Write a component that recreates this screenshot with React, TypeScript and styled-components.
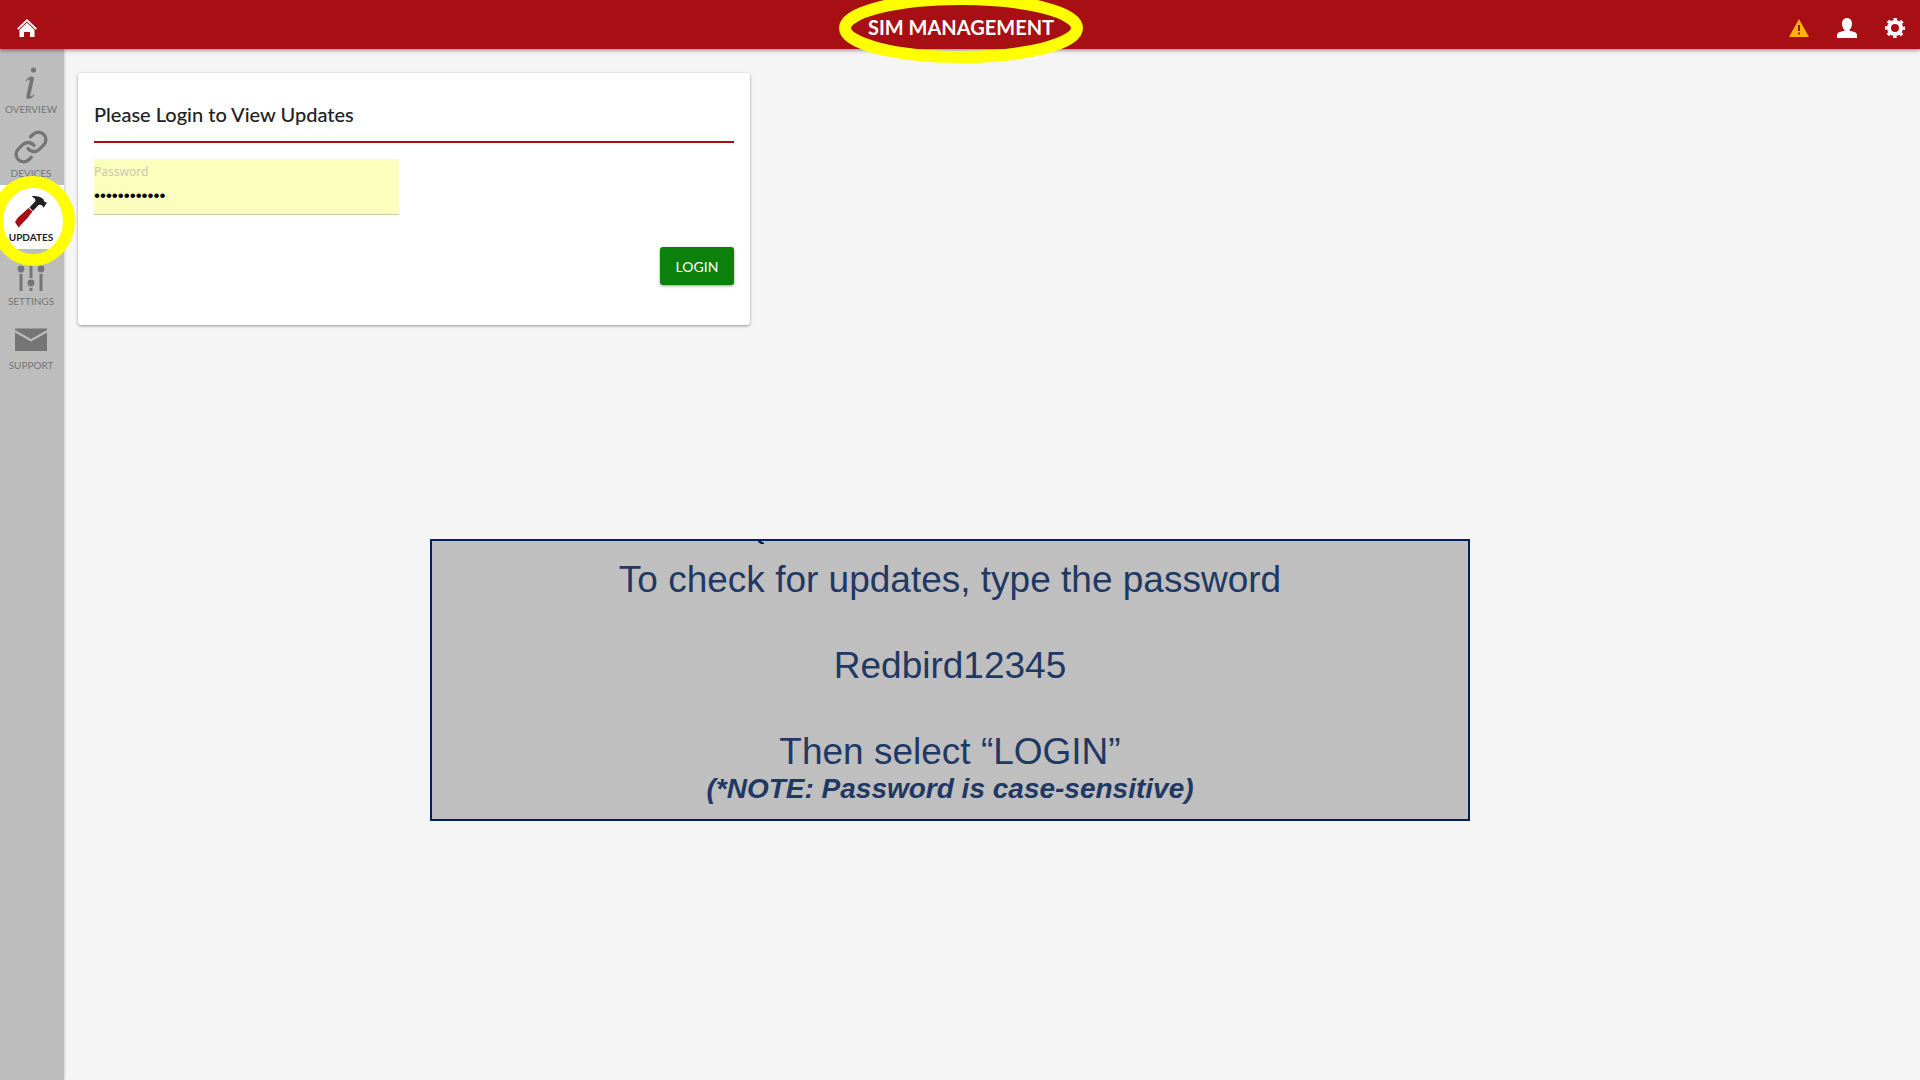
import React, { useState } from 'react';
import styled, { createGlobalStyle } from 'styled-components';

const GlobalStyle = createGlobalStyle`
  * { box-sizing: border-box; }
  body { margin: 0; background: #f5f5f5; font-family: Lato, 'Open Sans', sans-serif; color: #212121; }
`;

const Page = styled.div`
  display: flex;
  flex-direction: column;
  min-height: 100vh;
`;

const Header = styled.header`
  position: relative;
  z-index: 1;
  display: grid;
  grid-template-columns: 1fr auto 1fr;
  align-items: center;
  height: 49px;
  padding: 6px 13px 0 15px;
  background: #a70f14;
  box-shadow: 0 1px 4px rgba(0, 0, 0, 0.5);
`;

const Title = styled.h1`
  position: relative;
  margin: 0;
  padding-bottom: 2px;
  font-size: 20px;
  line-height: 24px;
  font-weight: 700;
  color: #fff;
`;

const Actions = styled.div`
  display: flex;
  justify-content: flex-end;
  gap: 24px;
`;

const IconButton = styled.button`
  display: flex;
  width: 24px;
  height: 24px;
  padding: 1px;
  border: 0;
  background: none;
  color: ${(p) => p.color || '#fff'};
  cursor: pointer;
`;

const Ring = styled.svg`
  position: absolute;
  top: 50%;
  left: 50%;
  transform: translate(-50%, -50%);
  overflow: visible;
  fill: none;
  stroke: #ff0;
  stroke-width: 12;
  pointer-events: none;
`;

const Body = styled.div`
  display: flex;
  flex: 1;
`;

const Nav = styled.nav`
  display: flex;
  flex-direction: column;
  flex: none;
  width: 64px;
  padding-top: 8px;
  background: #bdbdbd;
  box-shadow: 1px 0 2px rgba(0, 0, 0, 0.15);
`;

const NavItem = styled.a<{ $active?: boolean }>`
  position: relative;
  z-index: ${(p) => (p.$active ? 1 : 0)};
  display: flex;
  flex-direction: column;
  align-items: center;
  gap: 4px;
  height: 64px;
  padding: 10px 2px 0 0;
  background: ${(p) => (p.$active ? '#fff' : 'transparent')};
  color: ${(p) => (p.$active ? '#212121' : '#757575')};
  font-size: 10px;
  line-height: 12px;
  font-weight: ${(p) => (p.$active ? 700 : 400)};
  text-decoration: none;
`;

const Main = styled.main`
  flex: 1;
  padding: 24px 14px;
`;

const Card = styled.form`
  display: flex;
  flex-direction: column;
  max-width: 672px;
  padding: 28px 16px 40px;
  border-radius: 3px;
  background: #fff;
  box-shadow: 0 1px 3px rgba(0, 0, 0, 0.4);
`;

const CardTitle = styled.h2`
  margin: 0 0 16px;
  padding-bottom: 14px;
  border-bottom: 2px solid #a70f14;
  font-size: 20px;
  line-height: 26px;
  font-weight: 500;
`;

const Field = styled.div`
  display: flex;
  flex-direction: column;
  width: 305px;
  height: 56px;
  padding-top: 5px;
  border-bottom: 1px solid #cacaa8;
  background: #faffbd;
`;

const Label = styled.label`
  color: #c9c9b4;
  font-family: 'Noto Sans', sans-serif;
  font-size: 12px;
  line-height: 16px;
`;

const Input = styled.input`
  height: 32px;
  padding: 0;
  border: 0;
  outline: 0;
  background: transparent;
  color: #000;
  font-family: 'Liberation Sans', Arial, sans-serif;
  font-size: 17px;
`;

const LoginButton = styled.button`
  align-self: flex-end;
  width: 74px;
  height: 38px;
  margin-top: 32px;
  padding: 0;
  border: 0;
  border-radius: 3px;
  background: #0b800b;
  color: #fff;
  font-family: Lato, sans-serif;
  font-size: 14px;
  box-shadow: 0 1px 3px rgba(0, 0, 0, 0.4);
  cursor: pointer;
`;

const Note = styled.section`
  position: relative;
  max-width: 1040px;
  margin: 214px 0 0 352px;
  padding: 17px 16px 14px;
  border: 2px solid #002060;
  background: #bfbfbf;
  color: #1f3864;
  font-family: 'Liberation Sans', Arial, sans-serif;
  text-align: center;
`;

const Step = styled.p`
  margin: 0 0 43px;
  font-size: 37px;
  line-height: 43px;
  &:last-of-type { margin: 0; }
`;

const Hint = styled.em`
  display: block;
  font-size: 28px;
  line-height: 32px;
  font-weight: 700;
`;

const Notch = styled.svg`
  position: absolute;
  top: 0;
  left: 326px;
`;

const items = [
  {
    label: 'OVERVIEW',
    icon: (
      <g fill="currentColor">
        <circle cx="18.5" cy="3" r="2.6" />
        <path d="M10.500 13.600c2-2.500 4.300-4 6.200-4 1.800 0 2.500 1.300 2 3.600l-3.200 14.200c-.3 1.300-.1 1.900.5 1.900.8 0 1.800-.8 2.900-2.200l.6.600c-2 2.900-4 4.300-6.100 4.300-1.900 0-2.500-1.300-2-3.600l3.100-13.900c.3-1.300.1-1.900-.6-1.900-.8 0-1.700.6-2.800 1.700z" />
      </g>
    ),
  },
  {
    label: 'DEVICES',
    icon: (
      <g
        transform="translate(16 16) scale(1.5) translate(-12 -12)"
        fill="none"
        stroke="currentColor"
        strokeWidth="2.2"
        strokeLinecap="round"
      >
        <path d="M10 13a5 5 0 0 0 7.540.540l3-3a5 5 0 0 0-7.070-7.070l-1.720 1.710" />
        <path d="M14 11a5 5 0 0 0-7.540-.540l-3 3a5 5 0 0 0 7.070 7.070l1.710-1.710" />
      </g>
    ),
  },
  {
    label: 'UPDATES',
    active: true,
    icon: (
      <g>
        <path d="M0 27L3 22.500 13.500 13l4 3.500L12.500 23 3.500 32.500z" fill="#a70f14" />
        <path d="M14.500 12.500l6-6.500c0-2-1.500-3.500-4-4.700C20 .5 25 1 28.500 4.200c.3 1.800 1 2.800 3.500 3.500l-3.500 5c-1-2.700-2.800-3.700-5.200-2.500L18 16z" fill="#212121" />
      </g>
    ),
  },
  {
    label: 'SETTINGS',
    icon: (
      <g fill="currentColor">
        <path d="M4.500 0h3v32h-3zM14.500 0h3v32h-3zM24.500 0h3v32h-3z" />
        <circle cx="6" cy="10" r="4.200" stroke="#bdbdbd" strokeWidth="1.500" />
        <circle cx="16" cy="24" r="4.200" stroke="#bdbdbd" strokeWidth="1.500" />
        <circle cx="26" cy="10" r="4.200" stroke="#bdbdbd" strokeWidth="1.500" />
      </g>
    ),
  },
  {
    label: 'SUPPORT',
    icon: (
      <g fill="currentColor">
        <path d="M0 5.500h32V7L16 16 0 7z" />
        <path d="M0 9.500l16 9 16-9V28H0z" />
      </g>
    ),
  },
];

export default function App() {
  const [password, setPassword] = useState('Redbird12345');
  return (
    <Page>
      <GlobalStyle />
      <Header>
        <IconButton aria-label="Home">
          <svg width="22" height="22" viewBox="0 0 22 22" fill="currentColor">
            <path d="M11 2L1 11.500l1.300 1.200L11 4.600l8.700 8.100 1.300-1.200z" />
            <path d="M11 5.800l7.500 7V20H14v-5H8v5H3.500v-7.200z" />
          </svg>
        </IconButton>
        <Title>
          SIM MANAGEMENT
          <Ring width="244" height="70" viewBox="0 0 244 70">
            <ellipse cx="122" cy="35" rx="116" ry="29" />
          </Ring>
        </Title>
        <Actions>
          <IconButton aria-label="Alerts" color="#ffb300">
            <svg width="22" height="22" viewBox="0 0 22 22" fill="currentColor">
              <path fillRule="evenodd" d="M11 2l10 18H1zM10 8v6h2V8zm0 7.500v2h2v-2z" />
            </svg>
          </IconButton>
          <IconButton aria-label="Account">
            <svg width="22" height="22" viewBox="0 0 22 22" fill="currentColor">
              <path d="M11 1c3.200 0 5 2.400 5 5.700 0 2.500-1 4.800-2.500 6v1l4.800 1.200c1.800.5 2.700 1.700 2.700 3.500V21H1v-2.600c0-1.800.9-3 2.700-3.500l4.800-1.200v-1C7 11.500 6 9.200 6 6.700 6 3.400 7.800 1 11 1z" />
            </svg>
          </IconButton>
          <IconButton aria-label="Preferences">
            <svg width="22" height="22" viewBox="0 0 22 22" fill="none" stroke="currentColor">
              <circle cx="11" cy="11" r="6" strokeWidth="4" />
              <circle cx="11" cy="11" r="8.700" strokeWidth="2.800" strokeDasharray="3.400 3.433" strokeDashoffset="1.700" />
            </svg>
          </IconButton>
        </Actions>
      </Header>
      <Body>
        <Nav>
          {items.map((item) => (
            <NavItem key={item.label} href="#" $active={item.active}>
              <svg width="32" height="32" viewBox="0 0 32 32" overflow="visible">{item.icon}</svg>
              {item.label}
              {item.active && (
                <Ring width="84" height="90" viewBox="0 0 84 90">
                  <ellipse cx="43" cy="49" rx="36" ry="39" />
                </Ring>
              )}
            </NavItem>
          ))}
        </Nav>
        <Main>
          <Card onSubmit={(e) => e.preventDefault()}>
            <CardTitle>Please Login to View Updates</CardTitle>
            <Field>
              <Label htmlFor="password">Password</Label>
              <Input id="password" type="password" value={password} onChange={(e) => setPassword(e.target.value)} />
            </Field>
            <LoginButton>LOGIN</LoginButton>
          </Card>
          <Note>
            <Notch width="8" height="3" viewBox="0 0 8 3" fill="#002060">
              <path d="M0 0h3l3 2v1H3L0 1z" />
            </Notch>
            <Step>To check for updates, type the password</Step>
            <Step>Redbird12345</Step>
            <Step>Then select “LOGIN”</Step>
            <Hint>(*NOTE: Password is case-sensitive)</Hint>
          </Note>
        </Main>
      </Body>
    </Page>
  );
}
